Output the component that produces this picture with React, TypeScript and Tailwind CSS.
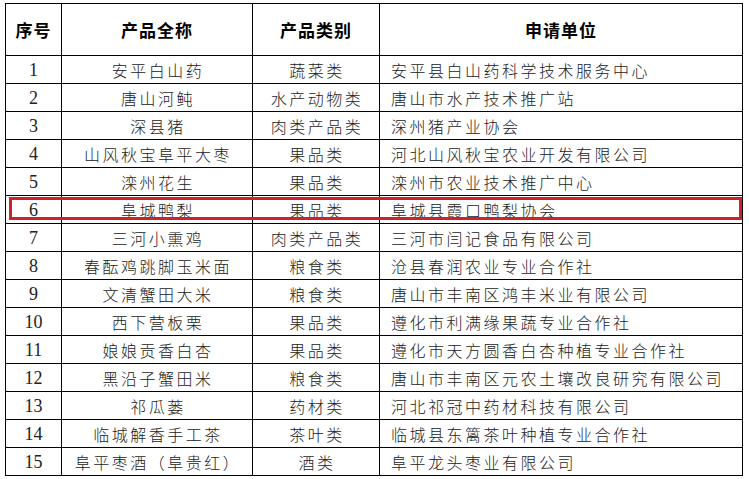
import React from "react";

interface Row {
  no: number;
  name: string;
  kind: string;
  unit: string;
}

const rows: Row[] = [
  { no: 1, name: "安平白山药", kind: "蔬菜类", unit: "安平县白山药科学技术服务中心" },
  { no: 2, name: "唐山河鲀", kind: "水产动物类", unit: "唐山市水产技术推广站" },
  { no: 3, name: "深县猪", kind: "肉类产品类", unit: "深州猪产业协会" },
  { no: 4, name: "山风秋宝阜平大枣", kind: "果品类", unit: "河北山风秋宝农业开发有限公司" },
  { no: 5, name: "滦州花生", kind: "果品类", unit: "滦州市农业技术推广中心" },
  { no: 6, name: "阜城鸭梨", kind: "果品类", unit: "阜城县霞口鸭梨协会" },
  { no: 7, name: "三河小熏鸡", kind: "肉类产品类", unit: "三河市闫记食品有限公司" },
  { no: 8, name: "春酝鸡跳脚玉米面", kind: "粮食类", unit: "沧县春润农业专业合作社" },
  { no: 9, name: "文清蟹田大米", kind: "粮食类", unit: "唐山市丰南区鸿丰米业有限公司" },
  { no: 10, name: "西下营板栗", kind: "果品类", unit: "遵化市利满缘果蔬专业合作社" },
  { no: 11, name: "娘娘贡香白杏", kind: "果品类", unit: "遵化市天方圆香白杏种植专业合作社" },
  { no: 12, name: "黑沿子蟹田米", kind: "粮食类", unit: "唐山市丰南区元农土壤改良研究有限公司" },
  { no: 13, name: "祁瓜蒌", kind: "药材类", unit: "河北祁冠中药材科技有限公司" },
  { no: 14, name: "临城解香手工茶", kind: "茶叶类", unit: "临城县东篱茶叶种植专业合作社" },
  { no: 15, name: "阜平枣酒（阜贵红）", kind: "酒类", unit: "阜平龙头枣业有限公司" },
];

const cjk = "font-['Noto_Sans_CJK_SC',sans-serif]";

export default function App() {
  return (
    <div className="w-[749px] h-[479px] bg-white pt-[3px] pl-[5px] overflow-hidden">
      <div className="relative w-[737px]">
        <table className="w-[737px] table-fixed border-collapse text-[#222]">
          <colgroup>
            <col className="w-[56px]" />
            <col className="w-[191px]" />
            <col className="w-[127px]" />
            <col className="w-[363px]" />
          </colgroup>
          <thead>
            <tr className={`h-[52px] text-[17px] font-bold text-black tracking-[1px] ${cjk}`}>
              <th className="border border-black text-center">序号</th>
              <th className="border border-black text-center">产品全称</th>
              <th className="border border-black text-center">产品类别</th>
              <th className="border border-black text-center">申请单位</th>
            </tr>
          </thead>
          <tbody>
            {rows.map((r) => (
              <tr key={r.no} className="h-[28px]">
                <td className="border border-black p-0 text-center text-[18px] leading-none font-['Liberation_Serif',serif]">
                  {r.no}
                </td>
                <td className={`border border-black p-0 pl-[2px] text-center text-[16px] leading-none font-light tracking-[2.5px] ${cjk}`}>
                  {r.name}
                </td>
                <td className={`border border-black p-0 pl-[2px] text-center text-[16px] leading-none font-light tracking-[2.5px] ${cjk}`}>
                  {r.kind}
                </td>
                <td className={`border border-black p-0 pl-[11px] text-left text-[16px] leading-none font-light tracking-[2.5px] whitespace-nowrap ${cjk}`}>
                  {r.unit}
                </td>
              </tr>
            ))}
          </tbody>
        </table>
        {/* highlight on row 6 */}
        <div className="absolute left-[4px] top-[194px] w-[733px] h-[23px] border-[3px] border-[#cc2229] pointer-events-none" />
      </div>
    </div>
  );
}
